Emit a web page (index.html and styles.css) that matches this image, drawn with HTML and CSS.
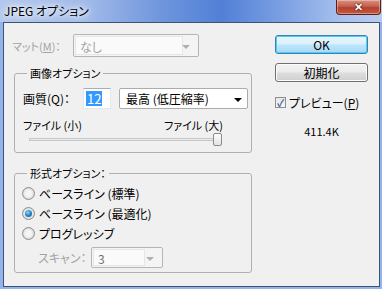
FILE: index.html
```html
<!DOCTYPE html>
<html lang="ja">
<head>
  <meta charset="UTF-8">
  <title>JPEG オプション</title>
  <link rel="stylesheet" href="styles.css">
</head>
<body>
  <div class="window">
    <div class="titlebar">
      <span class="title">JPEG オプション</span>
      <button class="close"><span>✕</span></button>
    </div>

    <div class="client">
      <!-- 左側 -->
      <div class="left">
        <div class="mat-row disabled">
          <label class="mat-label">マット(<u>M</u>)：</label>
          <div class="dropdown off mat-select">
            <div class="field">なし</div>
            <span class="arrow"></span>
          </div>
        </div>

        <fieldset class="group group-image">
          <legend>画像オプション</legend>
          <div class="quality-row">
            <label class="q-label">画質(Q)：</label>
            <div class="textbox"><span class="sel">12</span></div>
            <div class="dropdown q-select">
              <span class="value">最高 (低圧縮率)</span>
              <span class="arrow dark"></span>
            </div>
          </div>
          <div class="size-row">
            <span>ファイル (小)</span>
            <span>ファイル (大)</span>
          </div>
          <div class="slider">
            <div class="track"></div>
            <div class="thumb"></div>
          </div>
        </fieldset>

        <fieldset class="group group-format">
          <legend>形式オプション：</legend>
          <div class="radio-row"><span class="radio"></span>ベースライン (標準)</div>
          <div class="radio-row"><span class="radio on"></span>ベースライン (最適化)</div>
          <div class="radio-row"><span class="radio"></span>プログレッシブ</div>
          <div class="scan-row disabled">
            <label class="scan-label">スキャン：</label>
            <div class="dropdown off scan-select">
              <div class="field">3</div>
              <span class="arrow"></span>
            </div>
          </div>
        </fieldset>
      </div>

      <!-- 右側 -->
      <div class="right">
        <button class="btn btn-default">OK</button>
        <button class="btn btn-reset">初期化</button>
        <div class="check-row">
          <span class="checkbox">✓</span>
          <span>プレビュー(<u>P</u>)</span>
        </div>
        <div class="filesize">411.4K</div>
      </div>
    </div>
  </div>
</body>
</html>
```

FILE: styles.css
```css
* {
  box-sizing: border-box;
}
body {
  margin: 0;
  font-family: "Noto Sans CJK JP", "Noto Sans", sans-serif;
  font-feature-settings: "palt";
  font-size: 11px;
  color: #000;
  background: #fff;
}
.window {
  width: 382px;
  height: 289px;
  padding: 0 2px 2px 3px;
  background: #93b3ea;
  display: flex;
  flex-direction: column;
}
.titlebar {
  height: 22px;
  margin: 0 -2px 0 -3px;
  padding-left: 4px;
  display: flex;
  justify-content: space-between;
  align-items: flex-start;
  background: linear-gradient(90deg, #b4c8ec 0%, #a3bbea 22%, #6f96dd 42%, #5280d7 58%, #7ea2e3 75%, #a9c1ee 90%, #b7cbf0 100%);
}
.title {
  font-size: 12px;
  line-height: 21px;
  color: #000;
  text-shadow: 0 0 4px #fff, 0 0 8px #fff, 0 0 10px #e8f0ff;
}
.close {
  width: 45px;
  height: 15px;
  margin-right: 1px;
  padding: 0;
  border: 1px solid #5e1f17;
  border-top: none;
  border-radius: 0 0 4px 4px;
  background: linear-gradient(#d9907f 0%, #c7604c 45%, #b5402c 55%, #c45a44 100%);
  box-shadow: inset 0 0 0 1px rgba(255,255,255,0.35);
  color: #fff;
  font-size: 11px;
  font-weight: bold;
  line-height: 13px;
  text-shadow: 0 0 1px #400, 0 0 2px #400;
}
.client {
  flex: 1;
  border: 1px solid #3d5373;
  background: #f0f0f0;
  padding: 11px 0 0 8px;
  display: flex;
}
.disabled {
  color: #a3a3a3;
}

/* 左側 */
.left {
  width: 239px;
}
.mat-row {
  height: 23px;
  display: flex;
  align-items: center;
}
.mat-label {
  width: 61px;
}
.dropdown {
  position: relative;
  height: 21px;
  border: 1px solid #acacac;
  border-radius: 2px;
  background: #fff;
  display: flex;
  align-items: center;
}
.dropdown.off {
  background: #f4f4f4;
  border-color: #b5b5b5;
  padding: 1px;
}
.dropdown .field {
  height: 100%;
  background: #fafafa;
  border: 1px solid #e6e6e6;
  padding-left: 4px;
  line-height: 17px;
  font-size: 12px;
}
.mat-select {
  width: 126px;
  height: 23px;
}
.mat-select .field {
  width: 108px;
  line-height: 19px;
}
.arrow {
  position: absolute;
  right: 8px;
  top: 50%;
  margin-top: -1px;
  border-left: 4px solid transparent;
  border-right: 4px solid transparent;
  border-top: 4px solid #b0b0b0;
}
.arrow.dark {
  border-top-color: #000;
  right: 5px;
}

.group {
  margin: 0 0 0 2px;
  padding: 0 2px 0 8px;
  width: 238px;
  border: 1px solid #b0b0b0;
  border-radius: 3px;
}
.group legend {
  padding: 0 3px;
  margin-left: 4px;
  line-height: 14px;
  font-size: 11px;
}
.group-image {
  margin-top: 9px;
  height: 87px;
}
.group-format {
  margin-top: 13px;
  height: 107px;
}
.quality-row {
  margin-top: 7px;
  display: flex;
  align-items: center;
}
.q-label {
  width: 60px;
  font-size: 12px;
}
.textbox {
  width: 28px;
  height: 21px;
  border: 1px solid #abadb3;
  border-color: #abadb3 #e3e9ef #e3e9ef #e3e9ef;
  background: #fff;
  padding: 2px 0 0 2px;
}
.sel {
  display: inline-block;
  background: #3399ff;
  color: #fff;
  font-size: 13px;
  line-height: 15px;
  padding: 0 1px;
}
.q-select {
  width: 129px;
  margin-left: 8px;
  margin-top: 1px;
  padding-left: 6px;
  font-size: 12px;
}
.size-row {
  width: 200px;
  margin-top: 9px;
  line-height: 14px;
  display: flex;
  justify-content: space-between;
}
.slider {
  position: relative;
  width: 198px;
  height: 12px;
  margin: 1px 0 0 6px;
}
.track {
  position: absolute;
  left: 0;
  right: 10px;
  top: 5px;
  height: 3px;
  border: 1px solid #c8c8c8;
  background: #e7eaea;
}
.thumb {
  position: absolute;
  left: 184px;
  top: 0;
  width: 9px;
  height: 13px;
  border: 1px solid #8a8a8a;
  border-radius: 2px;
  background: linear-gradient(#fdfdfd, #e3e3e3);
}

.radio-row {
  height: 20px;
  display: flex;
  align-items: center;
  font-size: 12px;
}
.group-format legend + .radio-row {
  margin-top: 3px;
}
.radio {
  width: 13px;
  height: 13px;
  margin: 0 4px 0 -1px;
  border-radius: 50%;
  border: 1px solid #8e8f8f;
  background: radial-gradient(circle at 50% 50%, #f4f4f4 0 40%, #d5d5d5 75%);
  position: relative;
}
.radio.on::after {
  content: "";
  position: absolute;
  left: 2px;
  top: 2px;
  width: 7px;
  height: 7px;
  border-radius: 50%;
  background: radial-gradient(circle at 40% 35%, #8ad4fb 0, #1f7fc3 55%, #0d4f86 100%);
}
.scan-row {
  margin-top: 4px;
  padding-left: 15px;
  display: flex;
  align-items: center;
  font-size: 12px;
}
.scan-label {
  width: 53px;
}
.scan-select {
  width: 72px;
}
.scan-select .field {
  width: 52px;
  color: #6f6f6f;
}

/* 右側 */
.right {
  width: 93px;
  margin-left: 24px;
  display: flex;
  flex-direction: column;
}
.btn {
  height: 19px;
  padding: 0;
  font-family: inherit;
  font-feature-settings: "palt";
  font-size: 12px;
  line-height: 15px;
  color: #000;
  border-radius: 3px;
  border: 1px solid #707070;
  background: linear-gradient(#f2f2f2 0%, #ebebeb 48%, #dddddd 52%, #cfcfcf 100%);
  box-shadow: inset 0 0 0 1px #fcfcfc;
}
.btn-default {
  margin-top: 1px;
  border-color: #3c7fb1;
  background: linear-gradient(#eaf6fd 0%, #d9f0fc 48%, #bee6fd 52%, #a7d9f5 100%);
  box-shadow: inset 0 0 0 1px #48d0f7;
}
.btn-reset {
  margin-top: 9px;
}
.check-row {
  margin-top: 14px;
  height: 13px;
  display: flex;
  align-items: center;
  gap: 3px;
  font-size: 12px;
}
.checkbox {
  width: 11px;
  height: 11px;
  border: 1px solid #8f8f8f;
  background: linear-gradient(#e6e6e6, #f6f6f6);
  color: #3a5f9e;
  font-size: 10px;
  font-weight: bold;
  line-height: 9px;
  text-align: center;
}
.filesize {
  margin-top: 15px;
  text-align: center;
  line-height: 14px;
}
```
